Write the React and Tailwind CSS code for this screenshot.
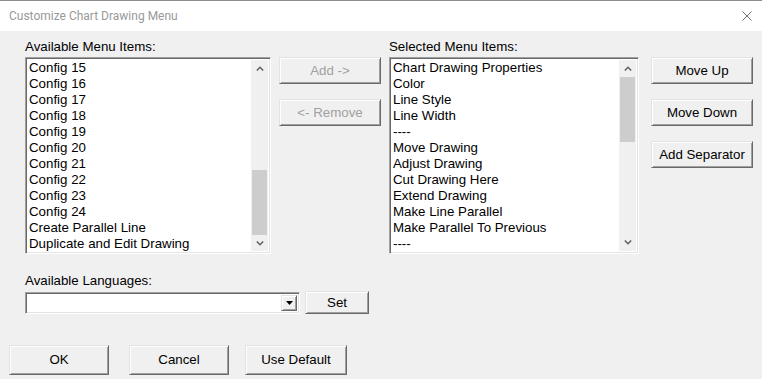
import React from 'react';

const available = [
  'Config 15',
  'Config 16',
  'Config 17',
  'Config 18',
  'Config 19',
  'Config 20',
  'Config 21',
  'Config 22',
  'Config 23',
  'Config 24',
  'Create Parallel Line',
  'Duplicate and Edit Drawing',
];

const selected = [
  'Chart Drawing Properties',
  'Color',
  'Line Style',
  'Line Width',
  '----',
  'Move Drawing',
  'Adjust Drawing',
  'Cut Drawing Here',
  'Extend Drawing',
  'Make Line Parallel',
  'Make Parallel To Previous',
  '----',
];

// classic raised / sunken 3D edges
const raised =
  'border border-t-[#e3e3e3] border-l-[#e3e3e3] border-r-[#696969] border-b-[#696969] shadow-[inset_1px_1px_#ffffff,inset_-1px_-1px_#a0a0a0] bg-[#f0f0f0]';
const sunken =
  'border border-t-[#a0a0a0] border-l-[#a0a0a0] border-r-[#ffffff] border-b-[#ffffff] shadow-[inset_1px_1px_#696969,inset_-1px_-1px_#e3e3e3]';

function Chevron({ up }) {
  return (
    <svg width="8" height="5" viewBox="0 0 8 5" className="block">
      <polyline
        points={up ? '0.8,4.5 4,1.3 7.2,4.5' : '0.8,0.5 4,3.7 7.2,0.5'}
        fill="none"
        stroke="#606060"
        strokeWidth="1.5"
      />
    </svg>
  );
}

function Scrollbar({ thumbTop, thumbHeight }) {
  return (
    <div className="flex w-[17px] shrink-0 flex-col bg-[#f0f0f0]">
      <div className="flex h-[17px] items-center justify-center">
        <Chevron up />
      </div>
      <div className="flex-1">
        <div style={{ height: thumbTop }} />
        <div className="mx-[1px] bg-[#cdcdcd]" style={{ height: thumbHeight }} />
      </div>
      <div className="flex h-[17px] items-center justify-center">
        <Chevron />
      </div>
    </div>
  );
}

function ListBox({ items, width, thumbTop }) {
  return (
    <div className={`flex h-[197px] bg-white p-[2px] ${sunken}`} style={{ width }}>
      <div className="flex-1 overflow-hidden pl-[1px]">
        {items.map((item, i) => (
          <div key={i} className="h-[16px] whitespace-nowrap leading-[16px]">
            {item}
          </div>
        ))}
      </div>
      <Scrollbar thumbTop={thumbTop} thumbHeight={65} />
    </div>
  );
}

function Button({ children, className = '', disabled }) {
  return (
    <button
      type="button"
      className={`flex items-center justify-center ${raised} ${
        disabled ? 'text-[#a0a0a0]' : 'text-black'
      } ${className}`}
    >
      {children}
    </button>
  );
}

export default function App() {
  return (
    <div className="h-[379px] w-[762px] overflow-hidden border-t border-[#8c8c8c] bg-[#f0f0f0] font-['Liberation_Sans',Arial,sans-serif] text-[13.3px] text-black">
      <div className="flex h-[30px] items-center justify-between bg-white pl-[9px] pr-[10px]">
        <span className="font-['Roboto',sans-serif] text-[12px] text-[#999999]">
          Customize Chart Drawing Menu
        </span>
        <svg width="10" height="10" viewBox="0 0 10 10">
          <path d="M0.5 0.5L9.5 9.5M9.5 0.5L0.5 9.5" stroke="#6f6f6f" strokeWidth="1" />
        </svg>
      </div>

      <div className="pt-[8px]">
        <div className="flex pl-[25px]">
          <div>
            <div className="mb-[2px] h-[16px] leading-[16px]">Available Menu Items:</div>
            <ListBox items={available} width={246} thumbTop={94} />
          </div>
          <div className="ml-[8px] flex flex-col gap-[15px] pt-[18px]">
            <Button disabled className="h-[27px] w-[102px]">Add -&gt;</Button>
            <Button disabled className="h-[27px] w-[102px]">&lt;- Remove</Button>
          </div>
          <div className="ml-[8px]">
            <div className="mb-[2px] h-[16px] leading-[16px]">Selected Menu Items:</div>
            <ListBox items={selected} width={250} thumbTop={0} />
          </div>
          <div className="ml-[12px] flex flex-col gap-[15px] pt-[18px]">
            <Button className="h-[27px] w-[102px]">Move Up</Button>
            <Button className="h-[27px] w-[102px]">Move Down</Button>
            <Button className="h-[27px] w-[102px]">Add Separator</Button>
          </div>
        </div>

        <div className="mt-[19px] pl-[25px]">
          <div className="h-[16px] leading-[16px]">Available Languages:</div>
          <div className="mt-[2px] flex items-start">
            <div className={`mt-[1px] flex h-[22px] w-[275px] justify-end bg-white p-[2px] ${sunken}`}>
              <div className={`flex w-[16px] items-center justify-center ${raised}`}>
                <svg width="7" height="4" viewBox="0 0 7 4">
                  <path d="M0 0H7L3.5 4Z" fill="#000000" />
                </svg>
              </div>
            </div>
            <Button className="ml-[5px] h-[23px] w-[64px]">Set</Button>
          </div>
        </div>

        <div className="mt-[31px] flex pl-[9px]">
          <Button className="h-[30px] w-[100px]">OK</Button>
          <Button className="ml-[20px] h-[30px] w-[100px]">Cancel</Button>
          <Button className="ml-[16px] h-[30px] w-[102px]">Use Default</Button>
        </div>
      </div>
    </div>
  );
}
